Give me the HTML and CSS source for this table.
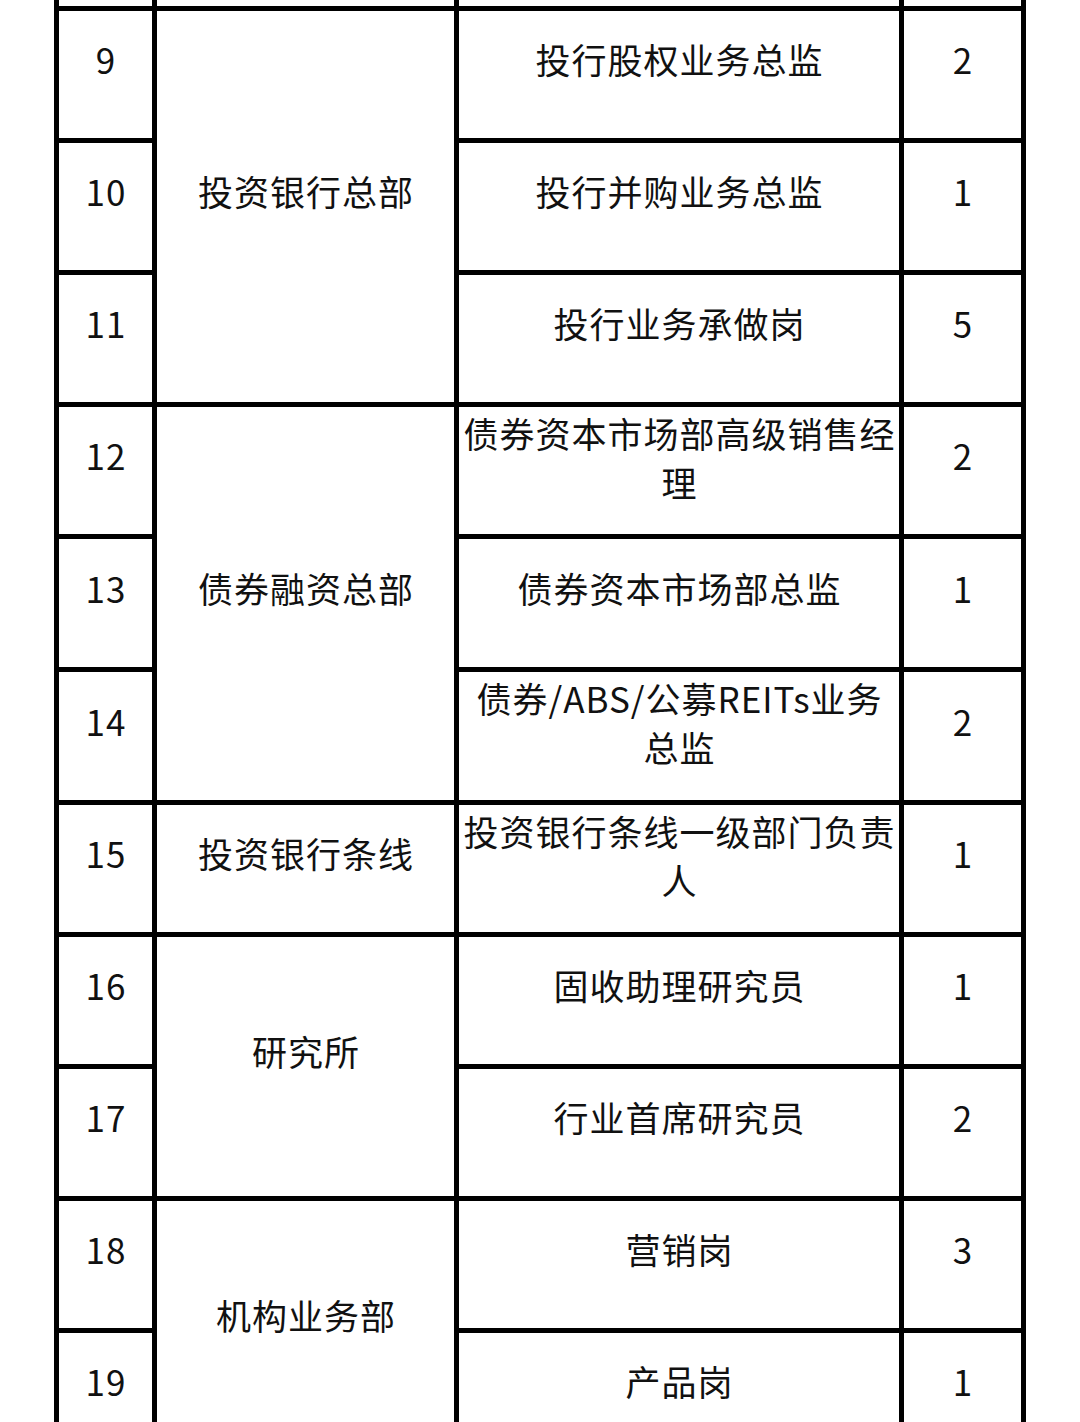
FILE: index.html
```html
<!DOCTYPE html>
<html lang="zh-CN">
<head>
<meta charset="utf-8">
<title>岗位表</title>
<link rel="stylesheet" href="styles.css">
</head>
<body>
<div class="sheet">
  <div class="cell stub"></div>
  <div class="cell stub"></div>
  <div class="cell stub"></div>
  <div class="cell stub"></div>

  <div class="cell">9</div>
  <div class="cell dept span3">投资银行总部</div>
  <div class="cell">投行股权业务总监</div>
  <div class="cell">2</div>

  <div class="cell">10</div>
  <div class="cell">投行并购业务总监</div>
  <div class="cell">1</div>

  <div class="cell">11</div>
  <div class="cell">投行业务承做岗</div>
  <div class="cell">5</div>

  <div class="cell">12</div>
  <div class="cell dept span3">债券融资总部</div>
  <div class="cell two">债券资本市场部高级销售经理</div>
  <div class="cell">2</div>

  <div class="cell">13</div>
  <div class="cell">债券资本市场部总监</div>
  <div class="cell">1</div>

  <div class="cell">14</div>
  <div class="cell two">债券/ABS/公募REITs业务总监</div>
  <div class="cell">2</div>

  <div class="cell">15</div>
  <div class="cell">投资银行条线</div>
  <div class="cell two">投资银行条线一级部门负责人</div>
  <div class="cell">1</div>

  <div class="cell">16</div>
  <div class="cell dept span2">研究所</div>
  <div class="cell">固收助理研究员</div>
  <div class="cell">1</div>

  <div class="cell">17</div>
  <div class="cell">行业首席研究员</div>
  <div class="cell">2</div>

  <div class="cell">18</div>
  <div class="cell dept span2">机构业务部</div>
  <div class="cell">营销岗</div>
  <div class="cell">3</div>

  <div class="cell">19</div>
  <div class="cell">产品岗</div>
  <div class="cell">1</div>
</div>
</body>
</html>
```

FILE: styles.css
```css
html, body {
  margin: 0;
  padding: 0;
  background: #fff;
}

body {
  font-family: "Noto Sans CJK SC", "Noto Sans", sans-serif;
  color: #111;
  overflow: hidden;
}

.sheet {
  width: 962px;
  margin-left: 54px;
  padding: 0 5px 5px;
  background: #000;
  display: grid;
  grid-template-columns: 93px 297px 440px 117px;
  grid-template-rows: 6px repeat(3, 127px) 127px 128px 128px repeat(5, 127px);
  gap: 5px;
}

.cell {
  background: #fff;
  display: flex;
  align-items: center;
  justify-content: center;
  text-align: center;
  font-size: 35px;
  line-height: 49px;
  letter-spacing: 1px;
  padding: 0 0 32px 1px;
}

.stub {
  padding: 0;
}

.two {
  padding-bottom: 28px;
}

.dept {
  padding-bottom: 33px;
}

.span3 {
  grid-row: span 3;
}

.span2 {
  grid-row: span 2;
}
```
